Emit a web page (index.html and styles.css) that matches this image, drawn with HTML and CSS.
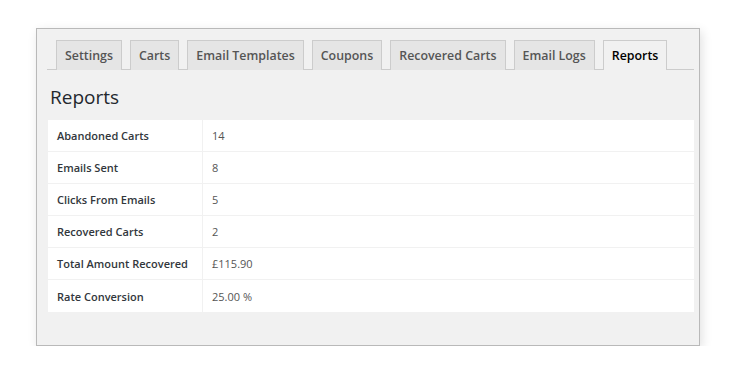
FILE: index.html
```html
<!DOCTYPE html>
<html lang="en">
<head>
  <meta charset="utf-8">
  <title>Reports</title>
  <link rel="stylesheet" href="styles.css">
</head>
<body>
  <div class="panel">
    <nav class="tabs">
      <a class="tab">Settings</a>
      <a class="tab">Carts</a>
      <a class="tab">Email Templates</a>
      <a class="tab">Coupons</a>
      <a class="tab">Recovered Carts</a>
      <a class="tab">Email Logs</a>
      <a class="tab active">Reports</a>
    </nav>

    <h2 class="title">Reports</h2>

    <table class="report">
      <tr><th>Abandoned Carts</th><td>14</td></tr>
      <tr><th>Emails Sent</th><td>8</td></tr>
      <tr><th>Clicks From Emails</th><td>5</td></tr>
      <tr><th>Recovered Carts</th><td>2</td></tr>
      <tr><th>Total Amount Recovered</th><td>&pound;115.90</td></tr>
      <tr><th>Rate Conversion</th><td>25.00 %</td></tr>
    </table>
  </div>
</body>
</html>
```

FILE: styles.css
```css
body {
  margin: 0;
  background: #fff;
  font-family: "Open Sans", "Liberation Sans", sans-serif;
}

.panel {
  box-sizing: border-box;
  width: 664px;
  height: 318px;
  margin: 28px 0 0 36px;
  padding: 11px 5px 0 10px;
  background: #f1f1f1;
  border: 1px solid #b9b9b9;
  box-shadow: 2px 3px 10px rgba(0, 0, 0, 0.12);
}

.tabs {
  display: flex;
  gap: 8px;
  padding-left: 9px;
  border-bottom: 1px solid #ccc;
  height: 29px;
}

.tab {
  box-sizing: border-box;
  height: 30px;
  padding: 0 8px;
  line-height: 29px;
  font-size: 12.4px;
  font-weight: 600;
  white-space: nowrap;
  color: #555;
  background: #e5e5e5;
  border: 1px solid #ccc;
  border-bottom: none;
}

.tab.active {
  background: #f1f1f1;
  color: #000;
}

.title {
  margin: 14px 0 0 3px;
  height: 36px;
  line-height: 26px;
  font-size: 19px;
  font-weight: 400;
  color: #23282d;
}

.report {
  width: 646px;
  border-collapse: collapse;
  background: #fff;
  margin-left: 1px;
  font-size: 11px;
}

.report th,
.report td {
  height: 31px;
  padding: 0 9px;
  text-align: left;
  white-space: nowrap;
  border-bottom: 1px solid #f1f1f1;
}

.report tr:last-child th,
.report tr:last-child td {
  height: 32px;
  border-bottom: none;
}

.report th {
  width: 136px;
  font-weight: 600;
  color: #32373c;
  border-right: 1px solid #f1f1f1;
}

.report td {
  color: #555;
}
```
